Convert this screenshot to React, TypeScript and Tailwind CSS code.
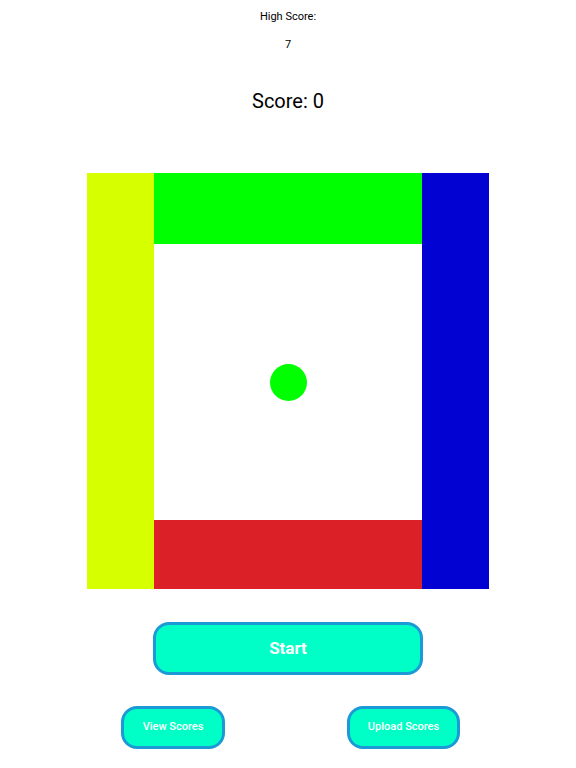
export default function App() {
  return (
    <div className="w-[576px] h-[768px] bg-white flex flex-col items-center text-black font-['Roboto','Liberation_Sans',Arial,sans-serif]">
      {/* Scores */}
      <p className="mt-[10px] text-[11px] leading-[14px]">High Score:</p>
      <p className="mt-[14px] text-[11px] leading-[14px]">7</p>
      <p className="mt-[37px] text-[20px] leading-[24px]">Score: 0</p>

      {/* Board */}
      <div className="mt-[60px] w-[402px] h-[416px] grid grid-cols-[67px_1fr_67px]">
        <div className="bg-[#d6ff00]" />
        <div className="flex flex-col">
          <div className="h-[71px] bg-[#00ff00]" />
          <div className="flex-1 bg-white flex items-center justify-center">
            <div className="w-[37px] h-[37px] rounded-full bg-[#00ff00]" />
          </div>
          <div className="h-[69px] bg-[#dc2028]" />
        </div>
        <div className="bg-[#0202d2]" />
      </div>

      {/* Controls */}
      <button className="mt-[33px] w-[270px] h-[53px] rounded-[16px] border-[3px] border-[#1b9ad6] bg-[#00ffc6] text-white text-[17px] font-bold">
        Start
      </button>
      <div className="mt-[31px] w-full flex">
        <button className="ml-[121px] w-[104px] h-[43px] rounded-[16px] border-[3px] border-[#1b9ad6] bg-[#00ffc6] text-white text-[11px] font-medium">
          View Scores
        </button>
        <button className="ml-[122px] w-[113px] h-[43px] rounded-[16px] border-[3px] border-[#1b9ad6] bg-[#00ffc6] text-white text-[11px] font-medium">
          Upload Scores
        </button>
      </div>
    </div>
  );
}
